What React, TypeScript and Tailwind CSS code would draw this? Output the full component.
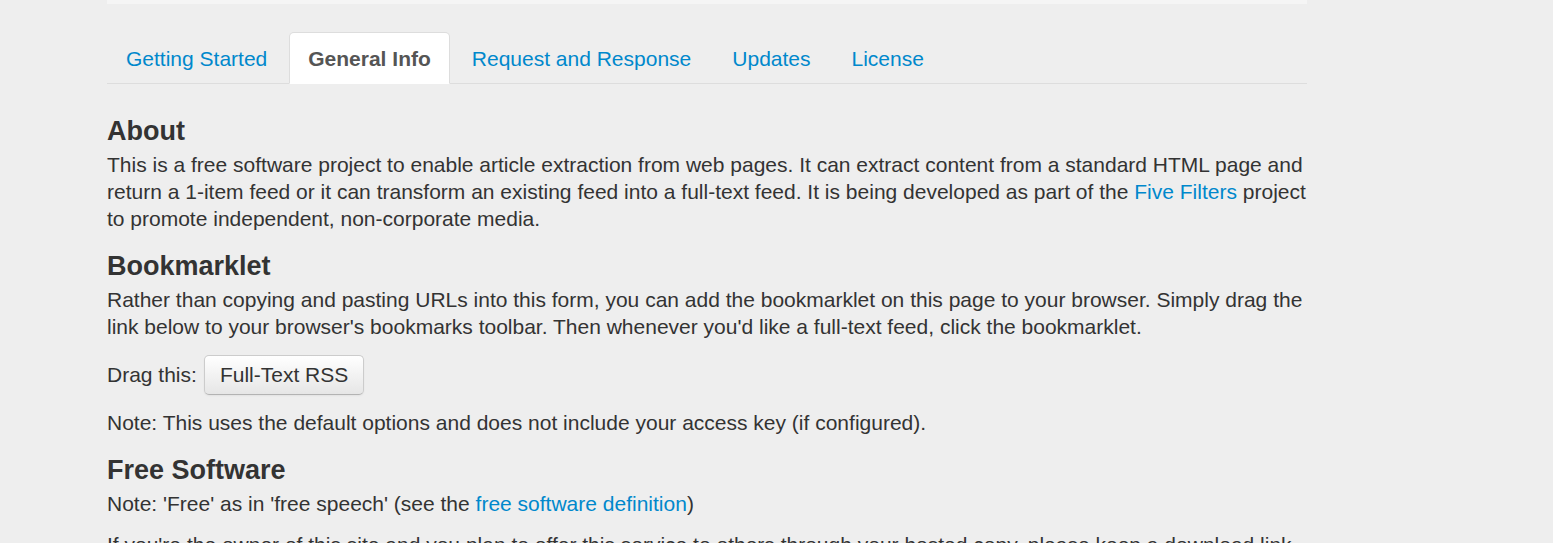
import { useState } from 'react';

type Tab = {
    id: string;
    label: string;
};

const tabs: Tab[] = [
    { id: 'start', label: 'Getting Started' },
    { id: 'general', label: 'General Info' },
    { id: 'request', label: 'Request and Response' },
    { id: 'updates', label: 'Updates' },
    { id: 'license', label: 'License' },
];

export default function App() {
    const [active, setActive] = useState('general');

    return (
        <div
            className="h-screen overflow-hidden bg-[#eeeeee] text-[21px] leading-[27px] text-[#333333]"
            style={{ fontFamily: '"Liberation Sans", Arial, sans-serif' }}
        >
            <div className="ml-[107px] w-[1200px]">
                {/* bottom edge of the form well above */}
                <div className="mb-[28px] h-[4px] bg-[#f5f5f5]" />

                <ul className="flex border-b border-[#dddddd]">
                    {tabs.map((tab) => (
                        <li key={tab.id} className="-mb-px mr-[3px]">
                            <button
                                type="button"
                                onClick={() => setActive(tab.id)}
                                className={
                                    active === tab.id
                                        ? 'rounded-t-[5px] border border-[#dddddd] border-b-transparent bg-white px-[18px] pt-[13px] pb-[11px] leading-[26px] font-bold text-[#555555]'
                                        : 'rounded-t-[5px] border border-transparent px-[18px] pt-[13px] pb-[11px] leading-[26px] text-[#0088cc] hover:border-[#eeeeee] hover:border-b-[#dddddd] hover:bg-[#eeeeee]'
                                }
                            >
                                {tab.label}
                            </button>
                        </li>
                    ))}
                </ul>

                <div className="mt-[27px]">
                    <h3 className="text-[27px] leading-[40px] font-bold">
                        About
                    </h3>
                    <p className="mb-[14px]">
                        This is a free software project to enable article
                        extraction from web pages. It can extract content from
                        a standard HTML page and return a 1-item feed or it can
                        transform an existing feed into a full-text feed. It is
                        being developed as part of the{' '}
                        <a href="#" className="text-[#0088cc]">
                            Five Filters
                        </a>{' '}
                        project to promote independent, non-corporate media.
                    </p>

                    <h3 className="text-[27px] leading-[40px] font-bold">
                        Bookmarklet
                    </h3>
                    <p className="mb-[14px]">
                        Rather than copying and pasting URLs into this form,
                        you can add the bookmarklet on this page to your
                        browser. Simply drag the link below to your browser's
                        bookmarks toolbar. Then whenever you'd like a full-text
                        feed, click the bookmarklet.
                    </p>
                    <p className="mb-[14px] flex items-baseline gap-[7px] pt-[1px]">
                        <span>Drag this:</span>
                        <a
                            href="#"
                            className="rounded-[5px] border border-[#cccccc] border-b-[#b3b3b3] bg-gradient-to-b from-white to-[#e6e6e6] px-[15px] py-[6px] leading-[26px] text-[#333333] shadow-[inset_0_1px_0_rgba(255,255,255,0.2),0_1px_2px_rgba(0,0,0,0.05)]"
                        >
                            Full-Text RSS
                        </a>
                    </p>
                    <p className="mb-[14px]">
                        Note: This uses the default options and does not
                        include your access key (if configured).
                    </p>

                    <h3 className="text-[27px] leading-[40px] font-bold">
                        Free Software
                    </h3>
                    <p className="mb-[14px]">
                        Note: 'Free' as in 'free speech' (see the{' '}
                        <a href="#" className="text-[#0088cc]">
                            free software definition
                        </a>
                        )
                    </p>
                    <p className="mb-[14px]">
                        If you're the owner of this site and you plan to offer
                        this service to others through your hosted copy,
                        please keep a download link so users can grab a copy
                        of the code if they want it.
                    </p>
                </div>
            </div>
        </div>
    );
}
